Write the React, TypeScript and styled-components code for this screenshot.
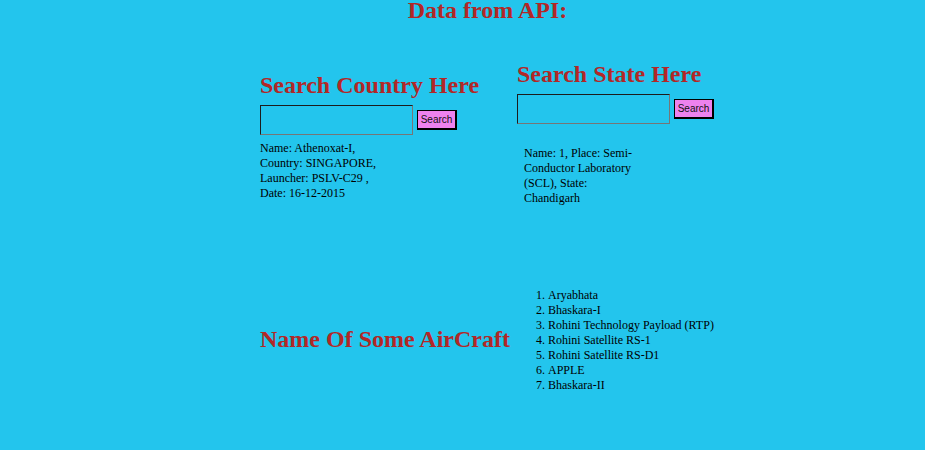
import styled, { createGlobalStyle } from 'styled-components';

const GlobalStyle = createGlobalStyle`
  html, body {
    margin: 0;
    padding: 0;
    background: #23c5ed;
    font-family: "Liberation Serif", "Times New Roman", serif;
    color: #000;
  }
`;

const Page = styled.div`
  min-height: 450px;
  background: #23c5ed;
`;

const Title = styled.h1`
  margin: 0;
  text-align: center;
  font-size: 24px;
  line-height: 21px;
  font-weight: bold;
  color: #b22727;
  padding-left: 50px;
`;

const Row = styled.div<{ $top: number }>`
  display: grid;
  grid-template-columns: 257px 257px;
  padding-left: 260px;
  margin-top: ${(p) => p.$top}px;
  align-items: start;
`;

const Column = styled.div<{ $offset?: number }>`
  display: flex;
  flex-direction: column;
  padding-top: ${(p) => p.$offset || 0}px;
`;

const Heading = styled.h2<{ $top?: number }>`
  margin: ${(p) => p.$top || 0}px 0 0;
  font-size: 24px;
  line-height: 28px;
  font-weight: bold;
  color: #b22727;
  white-space: nowrap;
`;

const SearchBar = styled.div`
  display: flex;
  align-items: center;
  gap: 4px;
  margin-top: 6px;
`;

const Input = styled.input`
  box-sizing: border-box;
  width: 153px;
  height: 30px;
  margin: 0;
  padding: 0 4px;
  background: transparent;
  border: 1px solid;
  border-color: #1c1c1c #767676 #767676 #1c1c1c;
  outline: none;
`;

const Button = styled.button`
  box-sizing: border-box;
  width: 40px;
  height: 20px;
  margin: 0;
  padding: 0;
  background: #ee82ee;
  border: 1px solid #000;
  border-right-width: 2px;
  border-bottom-width: 2px;
  font-family: "Liberation Sans", Arial, sans-serif;
  font-size: 10px;
  color: #111;
`;

const Info = styled.p<{ $top: number; $indent?: number }>`
  margin: ${(p) => p.$top}px 0 0 ${(p) => p.$indent || 0}px;
  width: 120px;
  font-size: 12px;
  line-height: 15px;
`;

const List = styled.ol`
  margin: 0 0 0 31px;
  padding: 0;
  font-size: 12px;
  line-height: 15px;
`;

const aircraft = [
  'Aryabhata',
  'Bhaskara-I',
  'Rohini Technology Payload (RTP)',
  'Rohini Satellite RS-1',
  'Rohini Satellite RS-D1',
  'APPLE',
  'Bhaskara-II',
];

export default function App() {
  return (
    <Page>
      <GlobalStyle />
      <Title>Data from API:</Title>
      <Row $top={39}>
        <Column $offset={11}>
          <Heading>Search Country Here</Heading>
          <SearchBar>
            <Input type="text" />
            <Button>Search</Button>
          </SearchBar>
          <Info $top={6}>
            Name: Athenoxat-I,<br />
            Country: SINGAPORE,<br />
            Launcher: PSLV-C29 ,<br />
            Date: 16-12-2015
          </Info>
        </Column>
        <Column>
          <Heading>Search State Here</Heading>
          <SearchBar>
            <Input type="text" />
            <Button>Search</Button>
          </SearchBar>
          <Info $top={22} $indent={7}>
            Name: 1, Place: Semi-Conductor Laboratory (SCL), State: Chandigarh
          </Info>
        </Column>
      </Row>
      <Row $top={82}>
        <Heading $top={37}>Name Of Some AirCraft</Heading>
        <List>
          {aircraft.map((name) => (
            <li key={name}>{name}</li>
          ))}
        </List>
      </Row>
    </Page>
  );
}
